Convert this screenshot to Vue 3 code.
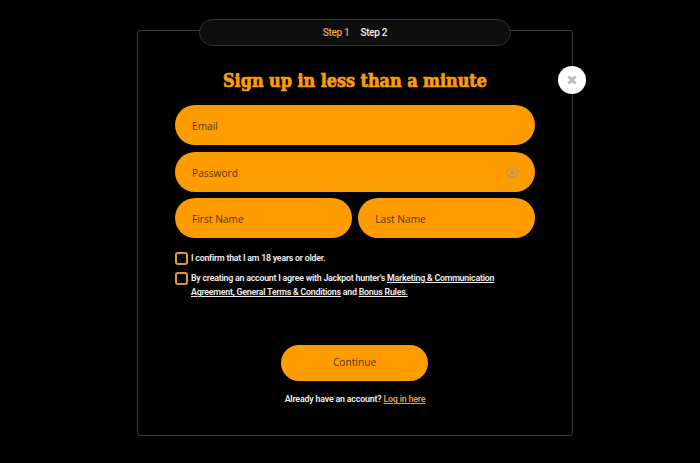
<script setup>
const steps = [
  { label: 'Step 1', active: true },
  { label: 'Step 2', active: false },
]
</script>

<template>
  <div class="page">
    <section class="frame">
      <nav class="steps">
        <span v-for="s in steps" :key="s.label" :class="['step', { active: s.active }]">{{ s.label }}</span>
      </nav>
      <button class="close" aria-label="Close">
        <svg viewBox="0 0 10 10" width="10" height="10">
          <path d="M1.500 1.500 8.500 8.500M8.500 1.500 1.500 8.500" stroke="#b5b5b5" stroke-width="2.600" fill="none" />
        </svg>
      </button>
      <h1 class="title">Sign up in less than a minute</h1>
      <div class="fields">
        <div class="field">Email</div>
        <div class="field">
          Password
          <svg class="eye" viewBox="0 0 16 12" width="15" height="11">
            <path d="M1 6C3 2.500 5.300 1 8 1s5 1.500 7 5c-2 3.500-4.300 5-7 5S3 9.500 1 6Z" fill="none" stroke="#b09a70" stroke-width="1.300" />
            <circle cx="8" cy="6" r="2.400" fill="#b09a70" />
          </svg>
        </div>
        <div class="row">
          <div class="field half">First Name</div>
          <div class="field half">Last Name</div>
        </div>
      </div>
      <div class="checks">
        <div class="check">
          <span class="box"></span>
          <p>I confirm that I am 18 years or older.</p>
        </div>
        <div class="check">
          <span class="box"></span>
          <p>By creating an account I agree with Jackpot hunter's <u>Marketing &amp; Communication Agreement, General Terms &amp; Conditions</u> and <u>Bonus Rules.</u></p>
        </div>
      </div>
      <button class="continue">Continue</button>
      <p class="login">Already have an account? <u>Log in here</u></p>
    </section>
  </div>
</template>

<style scoped>
.page {
  width: 700px;
  height: 463px;
  background: #000;
  padding-top: 30px;
  box-sizing: border-box;
  font-family: Roboto, "Liberation Sans", sans-serif;
  overflow: hidden;
}
.frame {
  position: relative;
  box-sizing: border-box;
  width: 436px;
  height: 406px;
  margin-left: 137px;
  border: 1px solid #3a3a3a;
  border-radius: 3px;
  padding: 38px 37px 0;
  display: flex;
  flex-direction: column;
}
.steps {
  position: absolute;
  left: 61px;
  top: -12px;
  box-sizing: border-box;
  width: 312px;
  height: 27px;
  background: #0e0e0e;
  border: 1px solid #333;
  border-radius: 14px;
  display: flex;
  justify-content: center;
  align-items: center;
  gap: 11px;
  font-size: 10px;
  font-weight: 500;
  letter-spacing: -0.3px;
}
.step { color: #f2f2f2; }
.step.active { color: #e9a04e; }
.close {
  position: absolute;
  left: 420px;
  top: 35px;
  width: 28px;
  height: 28px;
  padding: 0;
  border: none;
  border-radius: 50%;
  background: #fff;
  display: flex;
  align-items: center;
  justify-content: center;
}
.title {
  margin: 0 0 12px;
  height: 24px;
  line-height: 24px;
  text-align: center;
  color: #ff9d00;
  font-family: "DejaVu Serif", serif;
  font-stretch: condensed;
  font-size: 17.800px;
  font-weight: 700;
  -webkit-text-stroke: 0.7px #ff9d00;
  white-space: nowrap;
}
.fields {
  display: flex;
  flex-direction: column;
  gap: 6.500px;
}
.field {
  position: relative;
  box-sizing: border-box;
  height: 40px;
  border-radius: 20px;
  background: #ff9d00;
  color: #4f3406;
  font-family: "Open Sans", "Noto Sans", sans-serif;
  font-size: 10.200px;
  line-height: 42px;
  padding-left: 17px;
}
.half {
  flex: 1;
}
.row {
  display: flex;
  gap: 6.500px;
}
.eye {
  position: absolute;
  right: 15px;
  top: 15px;
}
.checks {
  margin-top: 13px;
  display: flex;
  flex-direction: column;
  gap: 6px;
}
.check {
  display: flex;
  gap: 3px;
  align-items: flex-start;
}
.box {
  flex: none;
  box-sizing: border-box;
  width: 13px;
  height: 13px;
  margin-top: 1px;
  border: 2px solid #d99a3a;
  border-radius: 3px;
}
.check p {
  margin: 0;
  width: 320px;
  color: #f2f2f2;
  font-size: 8.800px;
  font-weight: 600;
  letter-spacing: -0.22px;
  line-height: 14px;
}
.continue {
  align-self: center;
  margin-top: 46px;
  margin-left: -1px;
  width: 147px;
  height: 36px;
  border: none;
  border-radius: 18px;
  background: #ff9d00;
  color: #4f3406;
  font-family: "Open Sans", "Noto Sans", sans-serif;
  font-size: 10.200px;
  padding: 0 0 2px;
}
.login {
  margin: 12px 0 0;
  text-align: center;
  color: #f2f2f2;
  font-size: 8.800px;
  font-weight: 600;
  letter-spacing: -0.17px;
  line-height: 12px;
}
.login u { color: #e9a04e; }
</style>
